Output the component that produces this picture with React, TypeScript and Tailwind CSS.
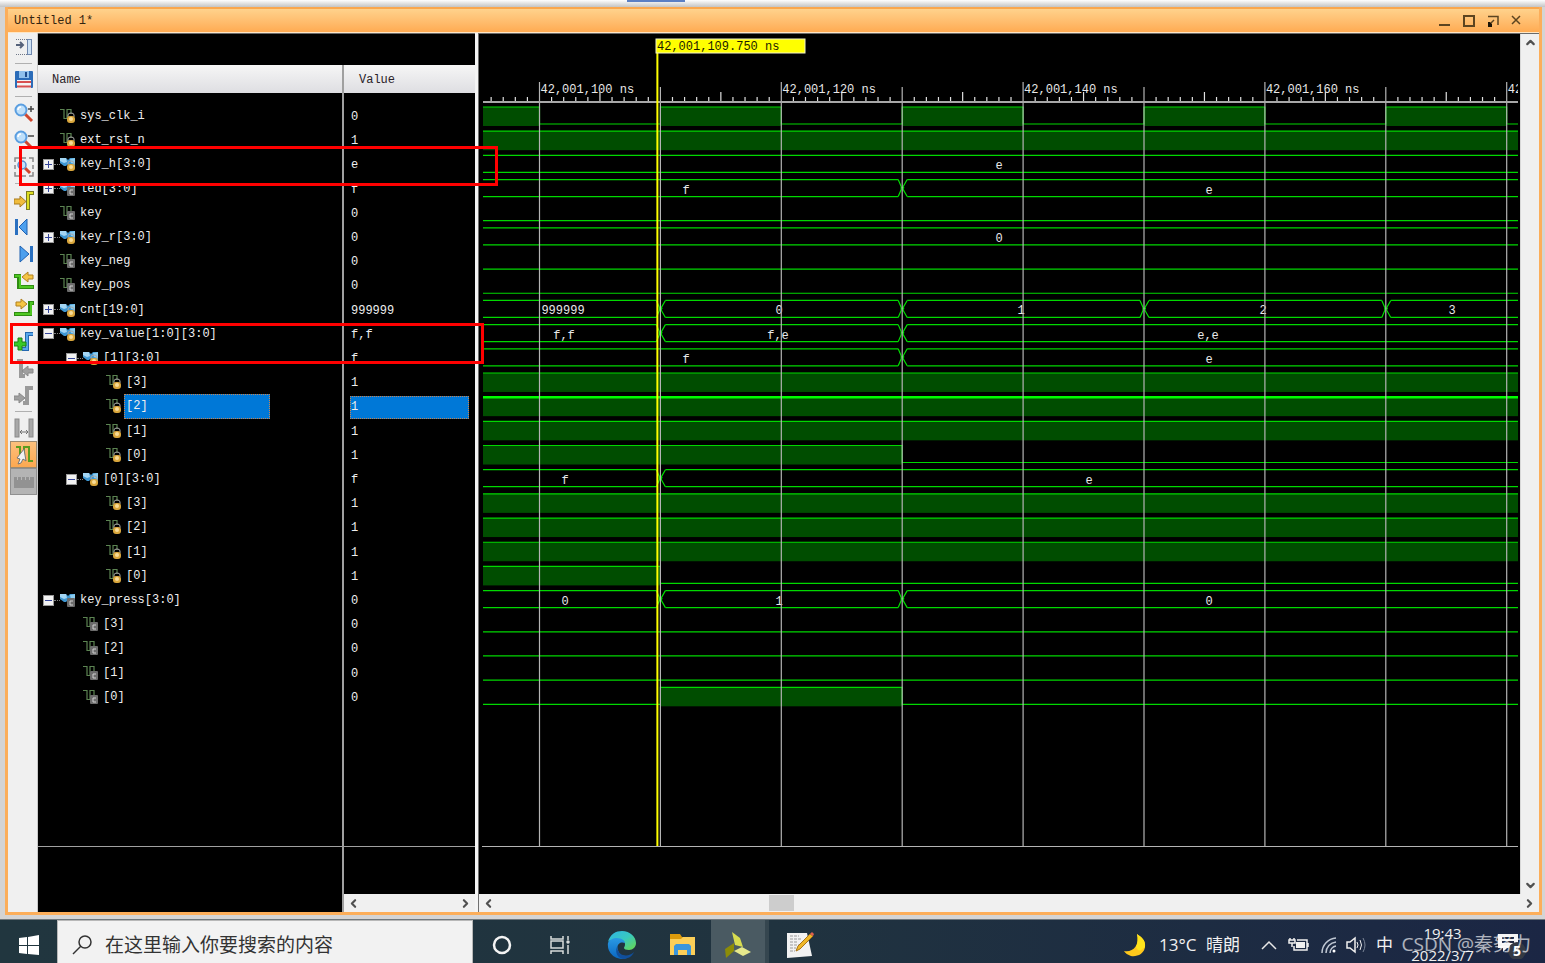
import React, { useState } from 'react';
import { ChevronDown, ChevronLeft, ChevronRight, ChevronUp } from 'lucide-react';

type Wave =
  | { kind: 'bit'; start: 0 | 1; edges: number[] }
  | { kind: 'bus'; edges: number[]; labels: [number, string][] };

interface Signal {
  id: string;
  name: string;
  value: string;
  depth: 0 | 1 | 2;
  toggle?: 'plus' | 'minus';
  tone: 'gold' | 'gray';
  wave: Wave;
}

const high: Wave = { kind: 'bit', start: 1, edges: [] };
const low: Wave = { kind: 'bit', start: 0, edges: [] };

// edges are in ns after 42,001,000; bus labels are [x, text]
const signals: Signal[] = [
  { id: 'clk', name: 'sys_clk_i', value: '0', depth: 0, tone: 'gold', wave: { kind: 'bit', start: 1, edges: [100, 110, 120, 130, 140, 150, 160, 170, 180, 190, 200, 210, 220, 230] } },
  { id: 'rst', name: 'ext_rst_n', value: '1', depth: 0, tone: 'gold', wave: high },
  { id: 'key_h', name: 'key_h[3:0]', value: 'e', depth: 0, toggle: 'plus', tone: 'gold', wave: { kind: 'bus', edges: [], labels: [[520, 'e']] } },
  { id: 'led', name: 'led[3:0]', value: 'f', depth: 0, toggle: 'plus', tone: 'gray', wave: { kind: 'bus', edges: [130], labels: [[207, 'f'], [730, 'e']] } },
  { id: 'key', name: 'key', value: '0', depth: 0, tone: 'gray', wave: low },
  { id: 'key_r', name: 'key_r[3:0]', value: '0', depth: 0, toggle: 'plus', tone: 'gold', wave: { kind: 'bus', edges: [], labels: [[520, '0']] } },
  { id: 'key_neg', name: 'key_neg', value: '0', depth: 0, tone: 'gray', wave: low },
  { id: 'key_pos', name: 'key_pos', value: '0', depth: 0, tone: 'gray', wave: low },
  { id: 'cnt', name: 'cnt[19:0]', value: '999999', depth: 0, toggle: 'plus', tone: 'gold', wave: { kind: 'bus', edges: [110, 130, 150, 170], labels: [[84, '999999'], [300, '0'], [542, '1'], [784, '2'], [973, '3']] } },
  { id: 'kv', name: 'key_value[1:0][3:0]', value: 'f,f', depth: 0, toggle: 'minus', tone: 'gold', wave: { kind: 'bus', edges: [110, 130], labels: [[85, 'f,f'], [299, 'f,e'], [729, 'e,e']] } },
  { id: 'kv1', name: '[1][3:0]', value: 'f', depth: 1, toggle: 'minus', tone: 'gold', wave: { kind: 'bus', edges: [130], labels: [[207, 'f'], [730, 'e']] } },
  { id: 'kv1_3', name: '[3]', value: '1', depth: 2, tone: 'gold', wave: high },
  { id: 'kv1_2', name: '[2]', value: '1', depth: 2, tone: 'gold', wave: high },
  { id: 'kv1_1', name: '[1]', value: '1', depth: 2, tone: 'gold', wave: high },
  { id: 'kv1_0', name: '[0]', value: '1', depth: 2, tone: 'gold', wave: { kind: 'bit', start: 1, edges: [130] } },
  { id: 'kv0', name: '[0][3:0]', value: 'f', depth: 1, toggle: 'minus', tone: 'gold', wave: { kind: 'bus', edges: [110], labels: [[86, 'f'], [610, 'e']] } },
  { id: 'kv0_3', name: '[3]', value: '1', depth: 2, tone: 'gold', wave: high },
  { id: 'kv0_2', name: '[2]', value: '1', depth: 2, tone: 'gold', wave: high },
  { id: 'kv0_1', name: '[1]', value: '1', depth: 2, tone: 'gold', wave: high },
  { id: 'kv0_0', name: '[0]', value: '1', depth: 2, tone: 'gold', wave: { kind: 'bit', start: 1, edges: [110] } },
  { id: 'kp', name: 'key_press[3:0]', value: '0', depth: 0, toggle: 'minus', tone: 'gray', wave: { kind: 'bus', edges: [110, 130], labels: [[86, '0'], [300, '1'], [730, '0']] } },
  { id: 'kp_3', name: '[3]', value: '0', depth: 1, tone: 'gray', wave: low },
  { id: 'kp_2', name: '[2]', value: '0', depth: 1, tone: 'gray', wave: low },
  { id: 'kp_1', name: '[1]', value: '0', depth: 1, tone: 'gray', wave: low },
  { id: 'kp_0', name: '[0]', value: '0', depth: 1, tone: 'gray', wave: { kind: 'bit', start: 0, edges: [110, 130] } },
];

const indent = ['pl-[5px]', 'pl-[28px]', 'pl-[51px]'];

/* ---------- waveform ---------- */

const LEFT = 4;
const RIGHT = 2400;
const PX_PER_NS = 12.09;
const tx = (ns: number) => 60.5 + (ns - 100) * PX_PER_NS;
const rowTop = (i: number) => 73 + i * 24.18;
const AMP = 17;

const BitWave: React.FC<{ wave: Extract<Wave, { kind: 'bit' }>; y: number; selected: boolean }> = ({ wave, y, selected }) => {
  const stops = [LEFT, ...wave.edges.map(tx), RIGHT];
  const levelY = (i: number) => ((wave.start + i) % 2 === 1 ? y : y + AMP);
  let d = '';
  for (let i = 0; i < stops.length - 1; i++) {
    d += `${i === 0 ? 'M' : 'L'}${stops[i]} ${levelY(i)}L${stops[i + 1]} ${levelY(i)}`;
  }
  return (
    <g>
      {stops.slice(0, -1).map((x, i) =>
        levelY(i) === y ? <rect key={x} x={x} y={y} width={stops[i + 1] - x} height={AMP + 2} fill="#004d00" /> : null
      )}
      <path d={d} fill="none" stroke={selected ? '#00ff00' : '#00d800'} strokeWidth={selected ? 2.5 : 1.2} />
    </g>
  );
};

const BusWave: React.FC<{ wave: Extract<Wave, { kind: 'bus' }>; y: number }> = ({ wave, y }) => {
  const stops = [LEFT, ...wave.edges.map(tx), RIGHT];
  const b = y + AMP;
  return (
    <g>
      {stops.slice(0, -1).map((x, i) => {
        const l = i === 0 ? x : x + 5;
        const end = stops[i + 1];
        const r = i === stops.length - 2 ? end : end - 4;
        return <path key={x} d={`M${l} ${y}H${r}M${l} ${b}H${r}`} stroke="#00d800" strokeWidth="1.2" />;
      })}
      {wave.edges.map((e) => {
        const x = tx(e);
        return (
          <path key={e} d={`M${x - 4} ${y}L${x - 1} ${y + 7}V${b - 7}L${x - 4} ${b}M${x + 5} ${y}L${x + 1} ${y + 7}V${b - 7}L${x + 5} ${b}M${x - 1} ${y + 8}h3`} fill="none" stroke="#00e000" strokeWidth="1.2" />
        );
      })}
      {wave.labels.map(([x, text]) => (
        <text key={x} x={x} y={y + 14} textAnchor="middle" fill="#e8e8e8">{text}</text>
      ))}
    </g>
  );
};

const WaveCanvas: React.FC<{ selectedId: string }> = ({ selectedId }) => {
  const ticks = Array.from({ length: 85 }, (_, i) => 96 + i);
  const cursor = tx(109.75);
  return (
    <svg className="block h-full w-full font-['Liberation_Mono',monospace] text-[12px]" role="img" aria-label="Waveforms">
      {signals.map((s, i) =>
        s.wave.kind === 'bit'
          ? <BitWave key={s.id} wave={s.wave} y={rowTop(i)} selected={s.id === selectedId} />
          : <BusWave key={s.id} wave={s.wave} y={rowTop(i)} />
      )}
      {ticks.map((t) => {
        const x = tx(t);
        if (t % 10 === 0) {
          return <line key={t} x1={x} x2={x} y1={t % 20 === 0 ? 48 : 53} y2="100%" stroke="#b4b4b4" strokeWidth="1.2" />;
        }
        return <line key={t} x1={x} x2={x} y1={t % 5 === 0 ? 58 : 63} y2={67} stroke="#e0e0e0" strokeWidth="1.2" />;
      })}
      <rect x={LEFT} y={67} width={RIGHT} height={2} fill="#a8a8a8" />
      {ticks.filter((t) => t % 20 === 0).map((t) => (
        <text key={t} x={tx(t) + 1} y={59} fill="#e8e8e8">{`42,001,${t} ns`}</text>
      ))}
      <rect x={cursor - 1} y={5} width={2} height="100%" fill="#ffff00" />
      <rect x={177} y={5} width={149} height={14} fill="#ffff00" stroke="#f4f4c8" />
      <text x={178} y={16} fill="#1c1c00">42,001,109.750 ns</text>
    </svg>
  );
};

/* ---------- signal list ---------- */

const SignalIcon: React.FC<{ bus: boolean; tone: 'gold' | 'gray' }> = ({ bus, tone }) => (
  <svg width="16" height="16" viewBox="0 0 16 16" className="shrink-0">
    {bus ? (
      <>
        <path d="M0 2h6l2 2 2-2h5v9h-5L8 8l-2 2H4L0 7z" fill="#3f97d2" />
        <path d="M0 2h6l1 4-3 1-4-2z" fill="#a4d6f4" />
        <path d="M10 3l5-1v6l-4-1z" fill="#8accf0" />
      </>
    ) : (
      <path d="M0 1.500h4v9h4M7 10V1.500h4V6" fill="none" stroke="#5c8452" strokeWidth="1.2" />
    )}
    {tone === 'gold' ? (
      <>
        <path d="M8 9V7q0-2 3-2t3 2v2" fill="none" stroke="#a8a8a8" />
        <rect x="7" y="8" width="8" height="7" rx="3" fill="#d9a63c" />
        <rect x="9" y="9" width="4" height="4" rx="2" fill="#f8dc98" />
      </>
    ) : (
      <>
        <rect x="7" y="6" width="8" height="9" rx="1" fill="#6c6c6c" />
        <path d="M13 9h-3v4h3" fill="none" stroke="#d0d0d0" />
      </>
    )}
  </svg>
);

const SignalRow: React.FC<{ signal: Signal; selected: boolean; onSelect: () => void }> = ({ signal, selected, onSelect }) => {
  const highlight = selected ? 'bg-[#0078d7] outline-1 -outline-offset-1 outline-dotted outline-[#c88450]' : '';
  return (
    <tr className="flex min-h-0 cursor-default" onClick={onSelect}>
      <td className={`flex w-[306px] items-center border-r-2 border-[#a0a0a0] ${indent[signal.depth]}`}>
        {signal.toggle ? (
          <>
            <button
              aria-label={signal.toggle === 'plus' ? 'Expand' : 'Collapse'}
              className="flex h-[11px] w-[11px] shrink-0 items-center justify-center border border-[#9a9a9a] bg-[#f2f2f2]"
            >
              <svg width="7" height="7" viewBox="0 0 7 7" stroke="#34459a">
                <path d={signal.toggle === 'plus' ? 'M0 3.5h7M3.5 0v7' : 'M0 3.5h7'} />
              </svg>
            </button>
            <span className="w-[6px] border-t border-dotted border-[#808080]" />
          </>
        ) : (
          <span className="w-[17px] shrink-0" />
        )}
        <SignalIcon bus={!!signal.toggle} tone={signal.tone} />
        <span className={`ml-[2px] flex h-full w-[146px] items-center px-[2px] ${highlight}`}>{signal.name}</span>
      </td>
      <td className="flex flex-1 items-center px-[6px] pt-[2px]">
        <span className={`flex h-full w-full items-center px-[1px] ${highlight}`}>{signal.value}</span>
      </td>
    </tr>
  );
};

const SpacerRow: React.FC = () => (
  <tr className="flex h-full" aria-hidden="true">
    <td className="w-[306px] border-r-2 border-[#a0a0a0]" />
    <td className="flex-1" />
  </tr>
);

const SignalTable: React.FC<{ selectedId: string; onSelect: (id: string) => void }> = ({ selectedId, onSelect }) => (
  <table className="flex w-[437px] shrink-0 flex-col border-t border-[#6a6a6a] bg-black pt-[31px] text-[12px] text-[#eeeeee]">
    <thead className="block">
      <tr className="flex h-[28px] bg-gradient-to-b from-[#f6f6f6] to-[#dedee2] text-left text-[#2a2228]">
        <th className="flex w-[306px] items-center border-r-2 border-[#a0a0a0] pt-[2px] pl-[14px] font-normal">Name</th>
        <th className="flex flex-1 items-center pt-[2px] pl-[15px] font-normal">Value</th>
      </tr>
    </thead>
    <tbody className="block h-[11px]"><SpacerRow /></tbody>
    <tbody className="grid h-[605px] auto-rows-fr">
      {signals.map((s) => (
        <SignalRow key={s.id} signal={s} selected={s.id === selectedId} onSelect={() => onSelect(s.id)} />
      ))}
    </tbody>
    <tbody className="block flex-1"><SpacerRow /></tbody>
    <tfoot className="block">
      <tr className="flex h-[66px] border-t border-[#a0a0a0]">
        <td className="w-[306px] border-r-2 border-[#a0a0a0]" />
        <td className="flex flex-1 flex-col justify-end">
          <div className="flex h-[18px] items-center justify-between bg-[#f0f0f0] px-[3px] text-[#505050]">
            <button aria-label="Scroll left"><ChevronLeft size={13} strokeWidth={4} /></button>
            <button aria-label="Scroll right"><ChevronRight size={13} strokeWidth={4} /></button>
          </div>
        </td>
      </tr>
    </tfoot>
  </table>
);

/* ---------- toolbar ---------- */

const lens = (
  <>
    <path d="M11 11l7 7" stroke="#d0452c" strokeWidth="3" />
    <circle cx="7" cy="7" r="5.500" fill="#bfe0fa" stroke="#5a9ee0" strokeWidth="2" />
    <path d="M4 7a3 3 0 0 1 3-3" fill="none" stroke="#fff" strokeWidth="1.500" />
  </>
);

type Tool = { label: string; icon: React.ReactNode; state?: 'active' | 'pressed' };

const toolGroups: Tool[][] = [
  [
    {
      label: 'Float panel',
      icon: (
        <>
          <path d="M2 2.500h11M2 17.500h11" stroke="#707888" strokeDasharray="1 1" />
          <path d="M2 8h7M6 5l3 3-3 3" fill="none" stroke="#56627a" strokeWidth="2" />
          <rect x="13.500" y="2.500" width="4" height="15" fill="#cfe2f4" stroke="#7088ae" />
        </>
      ),
    },
  ],
  [
    {
      label: 'Save',
      icon: (
        <>
          <rect x="1" y="1" width="18" height="17" rx="1" fill="#2b6cb8" />
          <rect x="5" y="1" width="10" height="7" fill="#8fc0ec" />
          <rect x="11" y="2" width="2" height="5" fill="#1d4c8c" />
          <rect x="3" y="10" width="14" height="8" fill="#f4f4f4" />
          <path d="M3 12h14M3 16.500h14" stroke="#d85050" strokeWidth="2" />
        </>
      ),
    },
  ],
  [
    { label: 'Zoom in', icon: <>{lens}<path d="M14 6h6M17 3v6" stroke="#444" strokeWidth="1.500" /></> },
    { label: 'Zoom out', icon: <>{lens}<path d="M14 6h6" stroke="#444" strokeWidth="1.500" /></> },
    {
      label: 'Zoom fit',
      icon: (
        <>
          <path d="M1 5V1h4M15 1h4v4M19 15v4h-4M5 19H1v-4M8 1h4M8 19h4M1 8v4M19 8v4" fill="none" stroke="#888" strokeWidth="1.500" />
          <path d="M11 11l5 5" stroke="#d0452c" strokeWidth="3" />
          <circle cx="8" cy="8" r="4" fill="#bfe0fa" stroke="#5a8ed0" strokeWidth="1.500" />
        </>
      ),
    },
  ],
  [
    {
      label: 'Go to cursor',
      icon: (
        <>
          <path d="M14 20V3h6" fill="none" stroke="#7a7a20" strokeWidth="4" />
          <path d="M14 19V3h5" fill="none" stroke="#dede20" strokeWidth="2" />
          <path d="M0 9h6V6l6 5.500L6 17v-3H0z" fill="#f0bc3c" stroke="#a87a1c" />
        </>
      ),
    },
    { label: 'Go to time 0', icon: <><path d="M2.500 2v16" stroke="#2a70c0" strokeWidth="3" /><path d="M13 2v16L5 10z" fill="#4da0ee" stroke="#1f60b0" /></> },
    { label: 'Go to last time', icon: <><path d="M17.500 2v16" stroke="#2a70c0" strokeWidth="3" /><path d="M6 2v16l9-8z" fill="#4da0ee" stroke="#1f60b0" /></> },
    {
      label: 'Previous transition',
      icon: (
        <>
          <path d="M0 5h5v11h15" fill="none" stroke="#2f8c12" strokeWidth="4" />
          <path d="M1 5h5v11h13" fill="none" stroke="#4fc822" strokeWidth="2" />
          <path d="M19 4h-5V1L8 6l6 5V8h5z" fill="#f6c544" stroke="#b08020" />
        </>
      ),
    },
    {
      label: 'Next transition',
      icon: (
        <>
          <path d="M0 16h16V5h4" fill="none" stroke="#2f8c12" strokeWidth="4" />
          <path d="M1 16h16V5h2" fill="none" stroke="#4fc822" strokeWidth="2" />
          <path d="M2 4h5V1l6 5-6 5V8H2z" fill="#f6c544" stroke="#b08020" />
        </>
      ),
    },
  ],
  [
    {
      label: 'Add marker',
      icon: (
        <>
          <path d="M8 18h5V3h6" fill="none" stroke="#2468b0" strokeWidth="4" />
          <path d="M8 18h5V3h6" fill="none" stroke="#58a8ec" strokeWidth="2" />
          <path d="M4 7h4v4h4v4H8v4H4v-4H0v-4h4z" fill="#38c828" stroke="#1c8014" />
        </>
      ),
    },
    { label: 'Previous marker', icon: <><path d="M3 3h4v15h4" fill="none" stroke="#9a9a9a" strokeWidth="4" /><path d="M19 11h-5V8l-6 5 6 5v-3h5z" fill="#a0a0a0" stroke="#8a8a8a" /></> },
    { label: 'Next marker', icon: <><path d="M9 18h4V3h6" fill="none" stroke="#9a9a9a" strokeWidth="4" /><path d="M0 11h5V8l6 5-6 5v-3H0z" fill="#a0a0a0" stroke="#8a8a8a" /></> },
  ],
  [
    {
      label: 'Swap cursors',
      icon: (
        <>
          <rect x="1" y="1" width="4" height="18" fill="#a8a8a8" stroke="#8a8a8a" />
          <rect x="15" y="1" width="4" height="18" fill="#a8a8a8" stroke="#8a8a8a" />
          <path d="M6 14h8M8 12l-2 2 2 2M12 12l2 2-2 2" fill="none" stroke="#707070" />
        </>
      ),
    },
    {
      label: 'Snap to transition',
      state: 'active',
      icon: (
        <>
          <path d="M2 2h4v13M10 15V2h5v14h4" fill="none" stroke="#5c9c20" strokeWidth="2" />
          <path d="M10 4l-7 9 3 1-2 5 3-1 2-4 3 2z" fill="#f2f2f2" stroke="#777" />
        </>
      ),
    },
    {
      label: 'Floating ruler',
      state: 'pressed',
      icon: <><rect x="0" y="5" width="20" height="11" fill="#929292" /><path d="M3.500 5v3M7.500 5v3M11.500 5v3M15.500 5v3" stroke="#b8b8b8" /></>,
    },
  ],
];

const toolState = {
  active: 'border border-[#9c8a70] bg-gradient-to-b from-[#fcc07c] to-[#fca850]',
  pressed: 'border border-[#909090] bg-[#b4b4b4]',
};

const Toolbar: React.FC = () => (
  <div className="flex w-[30px] shrink-0 flex-col border-r border-[#c8c8c8] bg-[#f0f0f0] pl-[2px]">
    {toolGroups.map((group, i) => (
      <React.Fragment key={group[0].label}>
        {i > 0 && <div className="flex h-[6px] items-center px-[5px]"><div className="h-px w-full bg-[#b0b0b0]" /></div>}
        {group.map((tool) => (
          <button
            key={tool.label}
            title={tool.label}
            className={`flex h-[27px] items-center justify-center ${tool.state ? toolState[tool.state] : ''}`}
          >
            <svg width="20" height="20" viewBox="0 0 20 20">{tool.icon}</svg>
          </button>
        ))}
      </React.Fragment>
    ))}
  </div>
);

/* ---------- window ---------- */

const TitleBar: React.FC = () => (
  <header className="flex h-[26px] items-center justify-between border-t-2 border-b border-t-[#faa74e] border-b-[#ffe6c4] bg-gradient-to-b from-[#ffd28c] to-[#ffab52] pr-[15px] pl-[6px] text-[12px] text-[#33240f]">
    <h1>Untitled 1*</h1>
    <div className="flex items-center gap-[10px]">
      <button aria-label="Minimize">
        <svg width="14" height="14" viewBox="0 0 14 14"><path d="M1 11h11" stroke="#5c4420" strokeWidth="2" /></svg>
      </button>
      <button aria-label="Maximize">
        <svg width="14" height="14" viewBox="0 0 14 14"><rect x="2" y="2" width="10" height="10" fill="none" stroke="#5c4420" strokeWidth="2" /></svg>
      </button>
      <button aria-label="Float">
        <svg width="14" height="14" viewBox="0 0 14 14">
          <path d="M2 2.500h10V11" fill="none" stroke="#5c4420" strokeWidth="1.500" />
          <path d="M8 6L5 9" stroke="#5c4420" strokeWidth="1.500" />
          <path d="M2 8h2l2 2v3H2z" fill="#1c1408" />
        </svg>
      </button>
      <button aria-label="Close">
        <svg width="14" height="14" viewBox="0 0 14 14"><path d="M2 2l8 8M10 2l-8 8" stroke="#5c4420" strokeWidth="1.500" /></svg>
      </button>
    </div>
  </header>
);

const WavePanel: React.FC<{ selectedId: string }> = ({ selectedId }) => (
  <section className="flex min-w-0 flex-1 flex-col border-t border-[#6a6a6a]">
    <div className="flex min-h-0 flex-1">
      <div className="flex min-w-0 flex-1 flex-col bg-black pr-[2px]">
        <div className="h-0 min-h-[700px] flex-1 overflow-hidden">
          <WaveCanvas selectedId={selectedId} />
        </div>
        <div className="ml-[3px] h-[48px] border-t border-[#b4b4b4]" />
      </div>
      <div className="flex w-[19px] flex-col items-center justify-between border-l border-[#d8d8d8] bg-[#f0f0f0] py-[2px] text-[#505050]">
        <button aria-label="Scroll up"><ChevronUp size={13} strokeWidth={4} /></button>
        <button aria-label="Scroll down"><ChevronDown size={13} strokeWidth={4} /></button>
      </div>
    </div>
    <div className="flex h-[18px] items-center bg-[#f0f0f0] px-[3px] text-[#505050]">
      <button aria-label="Scroll left"><ChevronLeft size={13} strokeWidth={4} /></button>
      <div className="flex h-[16px] flex-1 pl-[26%]"><div className="h-full w-[25px] bg-[#cdcdcd]" /></div>
      <button aria-label="Scroll right"><ChevronRight size={13} strokeWidth={4} /></button>
    </div>
  </section>
);

/* ---------- taskbar ---------- */

const EdgeIcon = () => (
  <svg width="30" height="30" viewBox="0 0 30 30">
    <defs>
      <linearGradient id="edgeTop" x1="0" y1="0" x2="1" y2="1">
        <stop offset="0" stopColor="#2fb4e6" /><stop offset=".5" stopColor="#38c8c0" /><stop offset="1" stopColor="#6ad848" />
      </linearGradient>
      <linearGradient id="edgeLow" x1="0" y1="0" x2="0" y2="1">
        <stop offset="0" stopColor="#2a9ae4" /><stop offset="1" stopColor="#0a66c0" />
      </linearGradient>
    </defs>
    <path d="M1 12C3 4 9 1 15 1c8 0 14 6 14 12 0 4-3 7-7 7-3 0-5-1-5-2 0-1 1-1 1-4 0-3-4-5-8-5-5 0-8 2-9 3z" fill="url(#edgeTop)" />
    <path d="M1 13c1-3 5-5 9-5 5 0 8 3 8 5-5-2-9 2-7 7 1 5 6 8 9 8a14 14 0 0 1-19-15z" fill="url(#edgeLow)" />
    <path d="M11 15c-2 4 1 9 5 10 4 1 8 0 11-3-2 5-7 7-11 7-6-1-9-8-5-14z" fill="#104f9c" />
  </svg>
);

const FolderIcon = () => (
  <svg width="28" height="24" viewBox="0 0 28 24">
    <path d="M1 1h10l2 3h13v6H1z" fill="#dc9a0c" />
    <path d="M1 6h11l2-2h12v18H1z" fill="#fccf58" />
    <path d="M5 22v-9l2-2h13l2 2v9h-4v-5H9v5z" fill="#3a96dc" />
  </svg>
);

const VivadoIcon = () => (
  <svg width="28" height="28" viewBox="0 0 28 28">
    <path d="M8 1l8 6 3 9-8-2z" fill="#d8dc50" />
    <path d="M1 18l9-6v8l-8 7z" fill="#8c8c08" />
    <path d="M10 20l8-4 9 5-8 4z" fill="#e6e88c" />
  </svg>
);

const NoteIcon = () => (
  <svg width="28" height="28" viewBox="0 0 28 28">
    <path d="M1 2h20l5 23-25 2z" fill="#f2f2f2" />
    <path d="M4 5h9M4 8h11M4 11h8M4 14h9M4 17h6M4 20h5" stroke="#9a9a9a" strokeDasharray="3 1" />
    <path d="M10 20l2-5L24 3l3 2-13 13z" fill="#f0b828" stroke="#a87418" />
    <path d="M24 3l2-2 2 2-1 2z" fill="#e06050" />
  </svg>
);

const Taskbar: React.FC = () => (
  <footer className="h-[44px] shrink-0 overflow-hidden bg-gradient-to-r from-[#21363f] via-[#20333f] to-[#1b2644] font-['Open_Sans','Noto_Sans_CJK_SC',sans-serif] text-[#f0f0f0]">
    <div className="flex h-[50px] items-center border-t border-[#70787c]">
      <button aria-label="Start" className="flex w-[57px] justify-center">
        <svg width="20" height="20" viewBox="0 0 20 20" fill="#fff">
          <path d="M0 3l8-1v8H0zM9 2l11-2v10H9zM0 11h8v8l-8-1zM9 11h11v9L9 19z" />
        </svg>
      </button>
      <label className="flex h-full w-[416px] items-center gap-[13px] border border-[#b8b8b8] bg-[#f2f2f2] pl-[14px] text-[#333]">
        <svg width="20" height="20" viewBox="0 0 20 20" fill="none" stroke="#333" strokeWidth="1.500">
          <circle cx="13" cy="7" r="6" /><path d="M9 11l-8 8" />
        </svg>
        <input
          aria-label="搜索"
          placeholder="在这里输入你要搜索的内容"
          className="h-full min-w-0 flex-1 text-[19px] outline-none placeholder:text-[#333]"
        />
      </label>
      <button aria-label="Cortana" className="flex w-[58px] justify-center">
        <svg width="20" height="20" viewBox="0 0 20 20"><circle cx="10" cy="10" r="8" fill="none" stroke="#f4f4f4" strokeWidth="2.500" /></svg>
      </button>
      <button aria-label="Task view" className="flex w-[58px] justify-center">
        <svg width="22" height="20" viewBox="0 0 22 20" fill="none" stroke="#d8dcdc" strokeWidth="1.500">
          <path d="M2 1v3h12V1M2 19v-3h12v3M19 1v4M19 10v9" /><rect x="2" y="6" width="12" height="7" /><circle cx="19" cy="7" r="1" fill="#fff" />
        </svg>
      </button>
      <button aria-label="Edge" className="flex w-[65px] justify-center"><EdgeIcon /></button>
      <button aria-label="File Explorer" className="flex w-[57px] justify-center"><FolderIcon /></button>
      <button aria-label="Vivado" className="flex h-full w-[54px] items-center justify-center bg-[#4a5a62]"><VivadoIcon /></button>
      <button aria-label="Notes" className="flex h-full w-[66px] items-center justify-center border-l-4 border-[#35464f]"><NoteIcon /></button>
      <div className="ml-auto flex h-full items-center pr-[16px] text-[17px]">
        <svg width="24" height="24" viewBox="0 0 24 24" className="mr-[12px]">
          <path d="M14 1c4 3 9 6 8 13-1 7-8 10-14 9-3-1-6-3-7-5 8 2 16-5 13-17z" fill="#ffc81c" />
          <path d="M14 1c4 3 9 6 8 13-5 5-7 4-9 0 2-4 2-9 1-13z" fill="#ffe41c" />
        </svg>
        <span className="w-[47px]">13°C</span>
        <span>晴朗</span>
        <button aria-label="Show hidden icons" className="ml-[20px]">
          <svg width="18" height="18" viewBox="0 0 18 18"><path d="M2 13l7-7 7 7" fill="none" stroke="#e8e8e8" strokeWidth="1.500" /></svg>
        </button>
        <svg width="22" height="18" viewBox="0 0 22 18" className="ml-[10px]" fill="none" stroke="#f0f0f0" strokeWidth="1.500">
          <path d="M9 4h10v10H6v-4M20 7v4M2 2v2M6 2v2M1 4h6v3H1zM4 7v4" /><rect x="8" y="6" width="9" height="6" fill="#f0f0f0" stroke="none" />
        </svg>
        <svg width="18" height="18" viewBox="0 0 18 18" className="ml-[10px]" fill="none" stroke="#c0c8d4" strokeWidth="1.500">
          <path d="M2 17A15 15 0 0 1 16 2M6 17A11 11 0 0 1 16 6M10 17a7 7 0 0 1 6-7" /><circle cx="14" cy="15" r="1.500" fill="#fff" stroke="none" />
        </svg>
        <svg width="20" height="18" viewBox="0 0 20 18" className="ml-[8px]" fill="none" stroke="#f0f0f0">
          <path d="M1 6h3l5-4v14l-5-4H1z" strokeWidth="1.500" /><path d="M11 6q2 3 0 6M14 4q3 5 0 10" /><path d="M17 2q4 7 0 14" stroke="#7a8496" />
        </svg>
        <span className="ml-[10px]">中</span>
        <div className="ml-[17px] flex w-[65px] flex-col items-center pb-[2px] text-[15px] leading-[22px]">
          <span>19:43</span>
          <span>2022/3/7</span>
        </div>
        <button aria-label="Notifications" className="ml-[22px]">
          <svg width="32" height="28" viewBox="0 0 32 28">
            <path d="M1 3h20v14H10l-4 4v-4H1z" fill="#f4f4f4" />
            <path d="M5 7h12M5 11h12" stroke="#222c44" strokeWidth="2" />
            <circle cx="20" cy="20" r="9" fill="#343a44" />
            <text x="20" y="25" textAnchor="middle" fontSize="14" fontWeight="bold" fill="#fff">5</text>
          </svg>
        </button>
      </div>
    </div>
  </footer>
);

const App: React.FC = () => {
  const [selectedId, setSelectedId] = useState('kv1_2');

  return (
    <div className="relative flex min-h-screen flex-col overflow-hidden bg-[#d4d4d4] font-['Liberation_Mono','Noto_Sans_CJK_SC',monospace]">
      <div className="flex h-[7px] shrink-0 justify-center bg-gradient-to-b from-[#ffffff] to-[#c4c4c4] pr-[234px]">
        <div className="h-[2px] w-[58px] bg-[#5b7fc4]" />
      </div>
      <main className="flex flex-1 flex-col pr-[3px] pb-[4px] pl-[5px]">
        <div className="flex flex-1 flex-col border-x-3 border-b-3 border-[#fcae5a]">
          <TitleBar />
          <div className="flex flex-1 bg-white">
            <Toolbar />
            <SignalTable selectedId={selectedId} onSelect={setSelectedId} />
            <div className="w-[4px] shrink-0 border-r border-[#707070] bg-[#f4f4f4]" />
            <WavePanel selectedId={selectedId} />
          </div>
        </div>
      </main>
      <Taskbar />

      {/* highlight marks */}
      <div className="pointer-events-none absolute top-[146px] left-[19px] h-[40px] w-[479px] border-3 border-[#ff0000]" />
      <div className="pointer-events-none absolute top-[323px] left-[10px] h-[41px] w-[474px] border-3 border-[#ff0000]" />
      <p className="pointer-events-none absolute right-[14px] bottom-[6px] font-['Open_Sans','Noto_Sans_CJK_SC',sans-serif] text-[19px] leading-[26px] text-white/65">
        CSDN @秦努力
      </p>
    </div>
  );
};

export default App;
